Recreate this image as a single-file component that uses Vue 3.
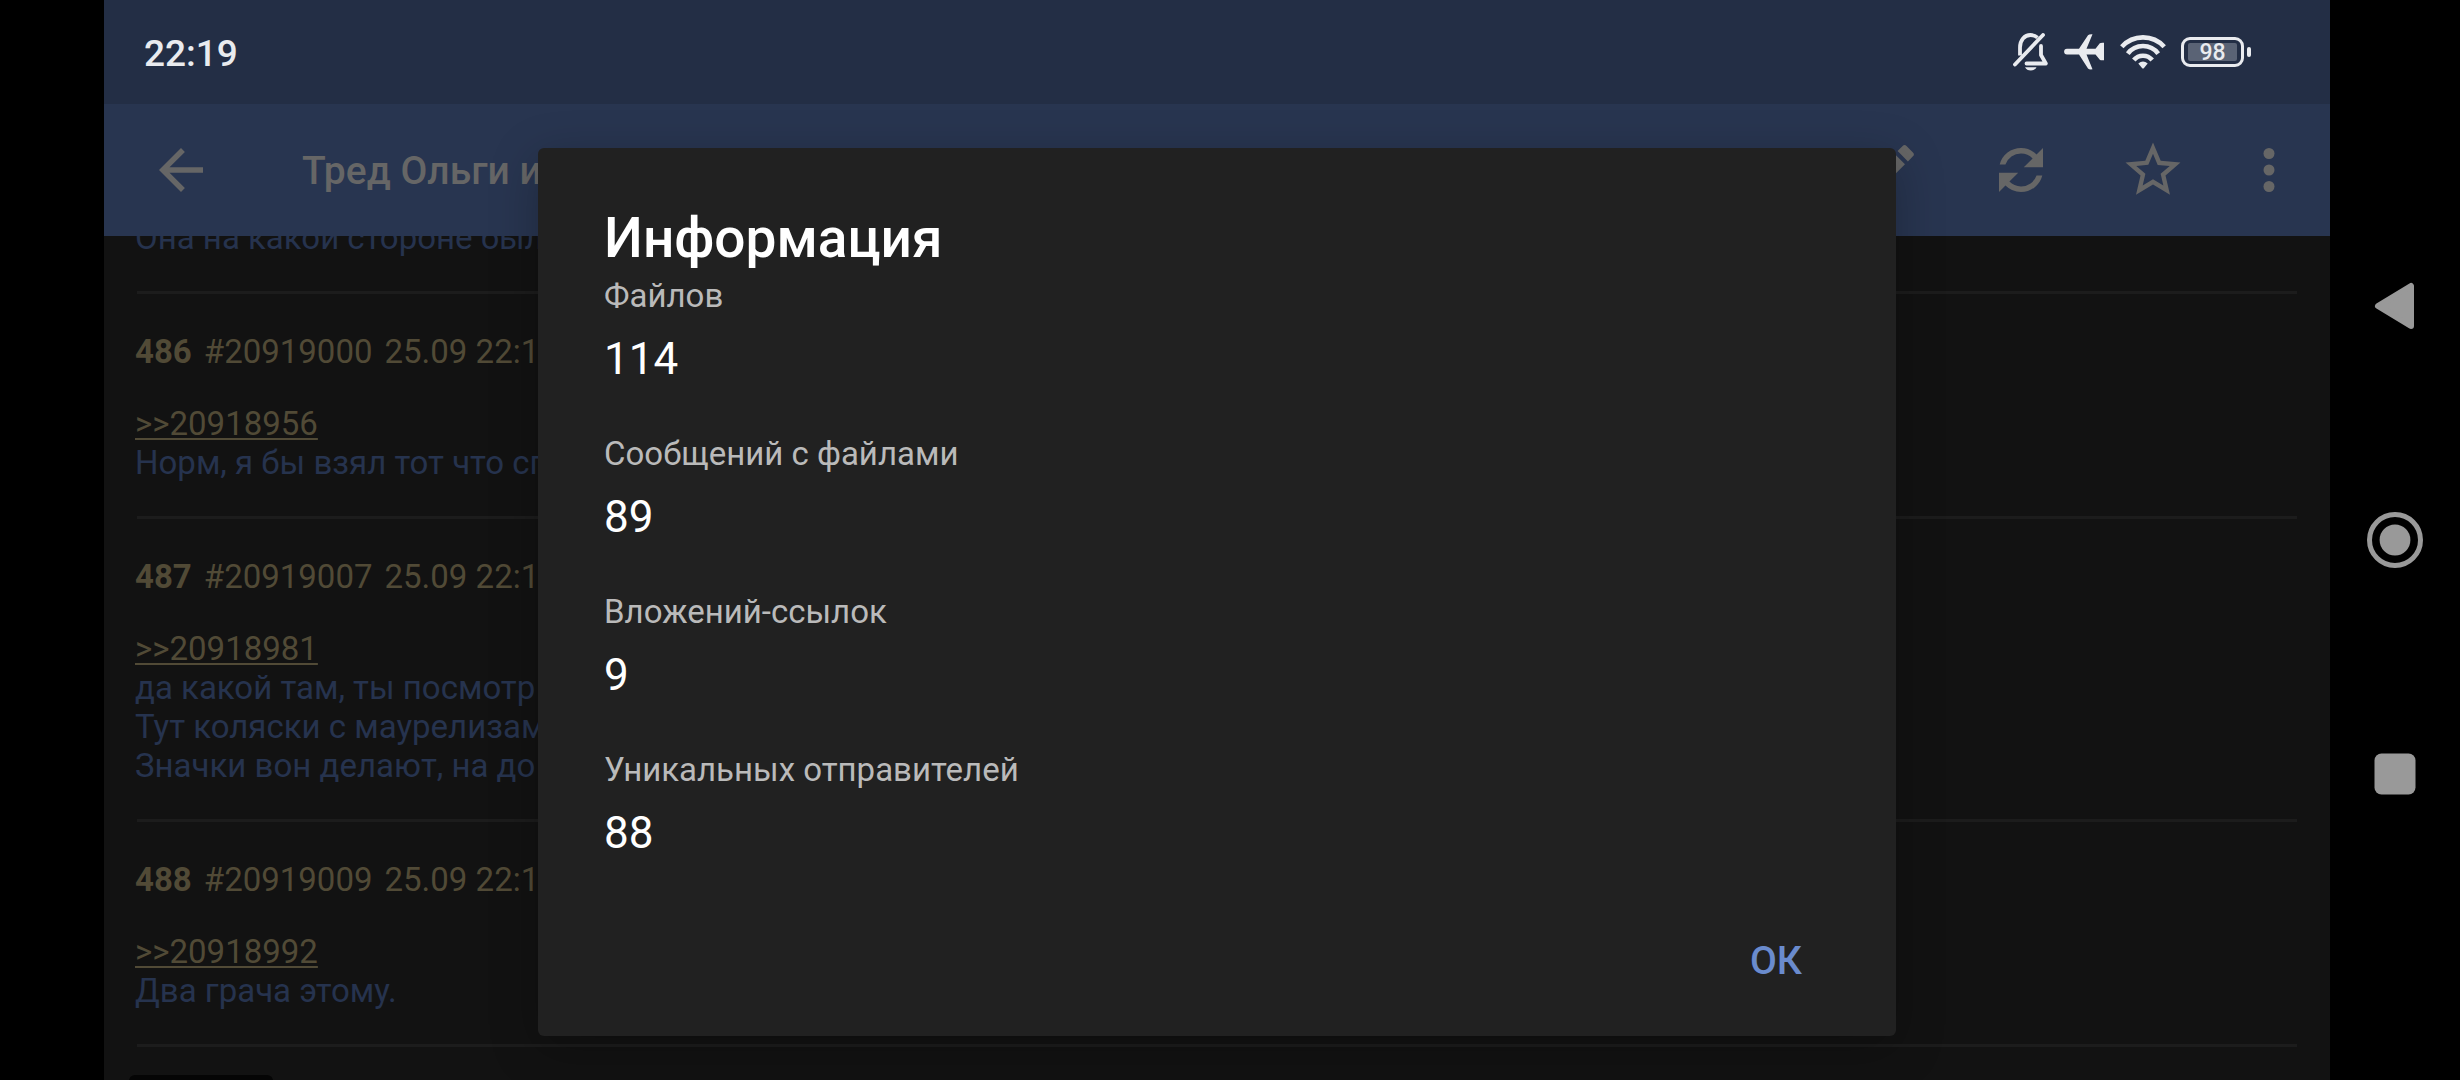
<template>
  <div class="device">
    <div class="screen">
      <header class="status">
        <time>22:19</time>
        <div class="status-icons">
          <svg width="36" height="38" viewBox="0 0 36 38" fill="none" stroke="currentColor" stroke-width="3.8">
            <path d="M7 22.500V14.500C7 7 11.500 2 17.500 2c2.800 0 5 .8 7 2.600" />
            <path d="M28 13V22l4.800 8.500H13.500" stroke-linejoin="round" stroke-linecap="round" />
            <path d="M2 31.500L30 2" stroke-linecap="round" />
            <path d="M12 34.200h11.500c-1 2-3 3.300-5.700 3.300S13 36.200 12 34.200z" fill="currentColor" stroke="none" />
          </svg>
          <svg width="41" height="36" viewBox="0 0 41 36" fill="currentColor">
            <path d="M3 14.700H15L24 1.200Q25 0 28.500.2L22.500 14.700H31.500L35.800 9.300Q36.500 8.600 40 8.800V26.200Q36.500 26.400 35.800 25.700L31.500 20.500H22.500L28.500 35.300Q25 35.800 24 34.400L15 20.500H3A2.900 2.900 0 0 1 3 14.700z" />
          </svg>
          <svg width="46" height="34" viewBox="0 0 46 34" fill="none" stroke="currentColor" stroke-width="4.600">
            <path d="M1.800 11.800A28.600 28.600 0 0 1 44.200 11.800" />
            <path d="M7.800 18.600A19 19 0 0 1 38.200 18.600" />
            <path d="M13.800 25A12 12 0 0 1 32.200 25" />
            <path d="M18.300 28.500Q23 24.500 27.700 28.500L24 33q-1 1-2 0z" fill="currentColor" stroke="none" />
          </svg>
          <div class="battery">
            <span class="cell"><span class="level">98</span></span>
            <span class="nub"></span>
          </div>
        </div>
      </header>

      <div class="window">
        <nav class="toolbar">
          <button class="back" aria-label="Назад">
            <svg viewBox="0 0 24 24"><path d="M20 11H7.830l5.590-5.590L12 4l-8 8 8 8 1.410-1.410L7.830 13H20v-2z" /></svg>
          </button>
          <h1>Тред Ольги и</h1>
          <button aria-label="Ответить">
            <svg viewBox="0 0 24 24"><path d="M3 17.250V21h3.750L17.810 9.940l-3.750-3.750L3 17.250zM20.710 7.040a1 1 0 0 0 0-1.410l-2.340-2.340a1 1 0 0 0-1.410 0l-1.830 1.830 3.750 3.750 1.830-1.830z" /></svg>
          </button>
          <button aria-label="Обновить">
            <svg viewBox="0 0 24 24">
              <path :d="refreshArrow" />
              <path :d="refreshArrow" transform="rotate(180 12 12)" />
            </svg>
          </button>
          <button aria-label="В избранное">
            <svg viewBox="0 0 24 24"><path d="M22 9.240l-7.190-.62L12 2 9.190 8.630 2 9.240l5.460 4.730L5.820 21 12 17.270 18.180 21l-1.630-7.030L22 9.240zM12 15.400l-3.760 2.270 1-4.280-3.320-2.880 4.380-.38L12 6.100l1.710 4.040 4.380.38-3.320 2.880 1 4.280L12 15.400z" /></svg>
          </button>
          <button class="more" aria-label="Ещё">
            <svg viewBox="0 0 24 24"><circle cx="12" cy="6" r="2" /><circle cx="12" cy="12" r="2" /><circle cx="12" cy="18" r="2" /></svg>
          </button>
        </nav>

        <main class="thread">
          <div class="posts">
            <article v-for="post in posts" :key="post.id" class="post">
              <div v-if="post.num" class="post-head">
                <b>{{ post.num }}</b>
                <span>#{{ post.id }}</span>
                <span>{{ post.date }}</span>
              </div>
              <a v-if="post.reply" href="#" @click.prevent>&gt;&gt;{{ post.reply }}</a>
              <p v-for="line in post.lines" :key="line">{{ line }}</p>
            </article>
            <div class="thumb"></div>
          </div>
        </main>

        <div v-if="open" class="overlay">
          <section class="dialog" role="dialog" aria-labelledby="dialog-title">
            <h2 id="dialog-title">Информация</h2>
            <dl>
              <div v-for="item in stats" :key="item.label">
                <dt>{{ item.label }}</dt>
                <dd>{{ item.value }}</dd>
              </div>
            </dl>
            <div class="actions">
              <button @click="open = false">ОК</button>
            </div>
          </section>
        </div>
      </div>
    </div>

    <aside class="nav">
      <button aria-label="Назад">
        <svg viewBox="0 0 56 56"><path d="M11 28L44 8V48z" stroke="currentColor" stroke-width="6" stroke-linejoin="round" /></svg>
      </button>
      <button aria-label="Домой">
        <svg viewBox="0 0 56 56"><circle cx="28" cy="28" r="25.500" fill="none" stroke="currentColor" stroke-width="5" /><circle cx="28" cy="28" r="15.400" /></svg>
      </button>
      <button aria-label="Недавние">
        <svg viewBox="0 0 56 56"><rect x="7.500" y="7.500" width="41" height="41" rx="7" /></svg>
      </button>
    </aside>
  </div>
</template>

<script setup>
import { ref } from "vue";

const open = ref(true);

const refreshArrow =
  "M12 4a8 8 0 0 0-7.750 6h2.090A6 6 0 0 1 12 6c1.660 0 3.140.69 4.220 1.780L13 11h7V4l-2.350 2.350A7.960 7.960 0 0 0 12 4z";

const stats = [
  { label: "Файлов", value: 114 },
  { label: "Сообщений с файлами", value: 89 },
  { label: "Вложений-ссылок", value: 9 },
  { label: "Уникальных отправителей", value: 88 },
];

const posts = [
  { id: "20918999", lines: ["Она на какой стороне был"] },
  {
    num: 486,
    id: "20919000",
    date: "25.09 22:1",
    reply: "20918956",
    lines: ["Норм, я бы взял тот что сп"],
  },
  {
    num: 487,
    id: "20919007",
    date: "25.09 22:1",
    reply: "20918981",
    lines: [
      "да какой там, ты посмотр",
      "Тут коляски с маурелизам",
      "Значки вон делают, на до",
    ],
  },
  {
    num: 488,
    id: "20919009",
    date: "25.09 22:1",
    reply: "20918992",
    lines: ["Два грача этому."],
  },
];
</script>

<style>
body {
  background: #000;
}
</style>

<style scoped>
.device {
  display: grid;
  grid-template-columns: 1fr 130px;
  height: 100vh;
  padding-left: 104px;
  overflow: hidden;
  box-sizing: border-box;
  background: #000;
  font-family: Roboto, "Noto Sans", sans-serif;
}
h1,
h2,
p,
dl,
dd {
  margin: 0;
}
button {
  display: flex;
  align-items: center;
  justify-content: center;
  padding: 0;
  border: 0;
  background: none;
  color: inherit;
  font: inherit;
}
svg {
  display: block;
}
.screen {
  display: flex;
  flex-direction: column;
  min-width: 0;
  min-height: 0;
  background: #121212;
}
.status {
  display: flex;
  flex: none;
  align-items: center;
  justify-content: space-between;
  height: 104px;
  padding: 0 79px 0 40px;
  box-sizing: border-box;
  background: #232e45;
  color: #e9ebef;
  font-size: 37px;
  font-weight: 500;
}
.status time {
  padding-top: 2px;
}
.status-icons {
  display: flex;
  align-items: center;
  gap: 15px;
}
.battery {
  display: flex;
  align-items: center;
  gap: 3px;
}
.cell {
  padding: 3px 4px;
  border: 3px solid currentColor;
  border-radius: 9px;
}
.level {
  display: block;
  width: 49px;
  height: 18px;
  border-radius: 2px;
  background: #5a6375;
  font-size: 23px;
  line-height: 20px;
  text-align: center;
}
.nub {
  width: 4px;
  height: 10px;
  border-radius: 2px;
  background: currentColor;
}
.window {
  position: relative;
  display: flex;
  flex: 1;
  flex-direction: column;
  min-height: 0;
}
.toolbar {
  display: flex;
  flex: none;
  align-items: center;
  height: 132px;
  padding: 0 11px 0 44px;
  background: #283550;
  color: #666;
}
.toolbar h1 {
  flex: 1;
  padding-top: 2px;
  font-size: 39px;
  font-weight: 500;
}
.toolbar button {
  width: 132px;
  height: 132px;
}
.toolbar .back {
  width: 66px;
  margin-right: 88px;
}
.toolbar .more {
  width: 100px;
}
.toolbar svg {
  width: 66px;
  height: 66px;
  fill: currentColor;
}
.thread {
  flex: 1;
  min-height: 0;
  overflow: hidden;
  color: #26334e;
  font-size: 33px;
  line-height: 39px;
}
/* list is scrolled slightly under the toolbar */
.posts {
  margin-top: -56px;
  padding: 0 33px 0 31px;
}
.post {
  padding: 38px 0 34px;
  background: linear-gradient(#1c1c1c, #1c1c1c) 2px 100% / 100% 3px no-repeat;
  border-bottom: 3px solid transparent;
  background-origin: border-box;
  background-clip: border-box;
}
.post-head {
  display: flex;
  gap: 12px;
  margin-bottom: 33px;
  color: #514a36;
}
.post a {
  color: #514a36;
  text-decoration-thickness: 2px;
  text-underline-offset: 3px;
}
.thumb {
  width: 144px;
  height: 144px;
  margin: 28px 0 0 -6px;
  border-radius: 6px;
  background: #050505;
}
.overlay {
  position: absolute;
  inset: 0;
  display: flex;
  align-items: center;
  justify-content: center;
}
.dialog {
  width: 61%;
  padding: 58px 66px 26px;
  box-sizing: border-box;
  border-radius: 6px;
  background: #212121;
  box-shadow: 0 12px 48px rgba(0, 0, 0, 0.25);
  color: #fff;
}
.dialog h2 {
  margin-bottom: 6px;
  font-size: 55px;
  font-weight: 500;
  line-height: 64px;
}
.dialog dl {
  display: flex;
  flex-direction: column;
  gap: 49px;
}
.dialog dt {
  margin-bottom: 18px;
  color: #bababa;
  font-size: 33px;
  line-height: 39px;
}
.dialog dd {
  font-size: 44px;
  line-height: 52px;
}
.actions {
  display: flex;
  justify-content: flex-end;
  margin-top: 53px;
}
.actions button {
  padding: 26px 28px;
  color: #6a8bcd;
  font-size: 39px;
  font-weight: 500;
  line-height: 46px;
}
.nav {
  display: flex;
  flex-direction: column;
  align-items: center;
  justify-content: center;
  gap: 178px;
  color: #999;
}
.nav svg {
  width: 56px;
  height: 56px;
  fill: currentColor;
}
</style>
